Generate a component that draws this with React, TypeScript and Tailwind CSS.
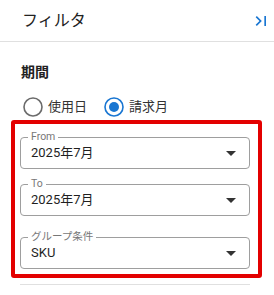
import React from "react";

function LastPageIcon() {
  return (
    <svg width="20" height="20" viewBox="0 0 24 24" fill="#1976d2">
      <path d="M5.59 7.41 10.18 12l-4.59 4.59L7 18l6-6-6-6zM16 6h2v12h-2z" />
    </svg>
  );
}

function Radio({ checked, label }: { checked: boolean; label: string }) {
  return (
    <label className="flex items-center">
      <svg width="20" height="20" viewBox="0 0 20 20">
        <circle
          cx="10"
          cy="10"
          r="9"
          fill="none"
          stroke={checked ? "#1976d2" : "#6b6b6b"}
          strokeWidth="1.6"
        />
        {checked && <circle cx="10" cy="10" r="5" fill="#1976d2" />}
      </svg>
      <span className="ml-[5px] text-[13px] leading-5 text-[#333]">{label}</span>
    </label>
  );
}

function SelectField({ label, value }: { label: string; value: string }) {
  return (
    <div className="relative flex h-8 items-center justify-between rounded border border-[#9e9e9e] pl-[10px] pr-[6px]">
      <span className="absolute left-[7px] top-[-8px] bg-white px-[3px] text-[10.5px] leading-[14px] text-[#777]">
        {label}
      </span>
      <span className="text-[13px] leading-5 text-[#1f1f1f]">{value}</span>
      <svg width="24" height="24" viewBox="0 0 24 24" fill="#333">
        <path d="M7 10l5 5 5-5z" />
      </svg>
    </div>
  );
}

export default function App() {
  return (
    <div className="h-[295px] w-[274px] overflow-hidden bg-white font-['Roboto','Noto_Sans_CJK_JP',sans-serif]">
      {/* Header */}
      <div className="flex h-[42px] items-center justify-between border-b border-[#e0e0e0] pl-[22px] pr-[3px]">
        <span className="text-[16px] leading-6 text-[#222]">フィルタ</span>
        <LastPageIcon />
      </div>

      <div className="pl-[21px] pt-[20px] text-[14px] font-bold leading-5 text-[#222]">期間</div>

      <div className="mt-[15px] flex items-center gap-[17px] pl-[23px]">
        <Radio checked={false} label="使用日" />
        <Radio checked={true} label="請求月" />
      </div>

      {/* Highlighted filters */}
      <div className="ml-[11px] mt-[3px] flex w-[251px] flex-col rounded-[3px] border-4 border-[#e30000] pb-[5px] pl-[5px] pr-[8px] pt-[13px]">
        <SelectField label="From" value="2025年7月" />
        <div className="mt-[15px]">
          <SelectField label="To" value="2025年7月" />
        </div>
        <div className="mt-[21px]">
          <SelectField label="グループ条件" value="SKU" />
        </div>
      </div>

      <div className="ml-[20px] mt-[6px] h-px w-[230px] bg-[#e0e0e0]" />
    </div>
  );
}
